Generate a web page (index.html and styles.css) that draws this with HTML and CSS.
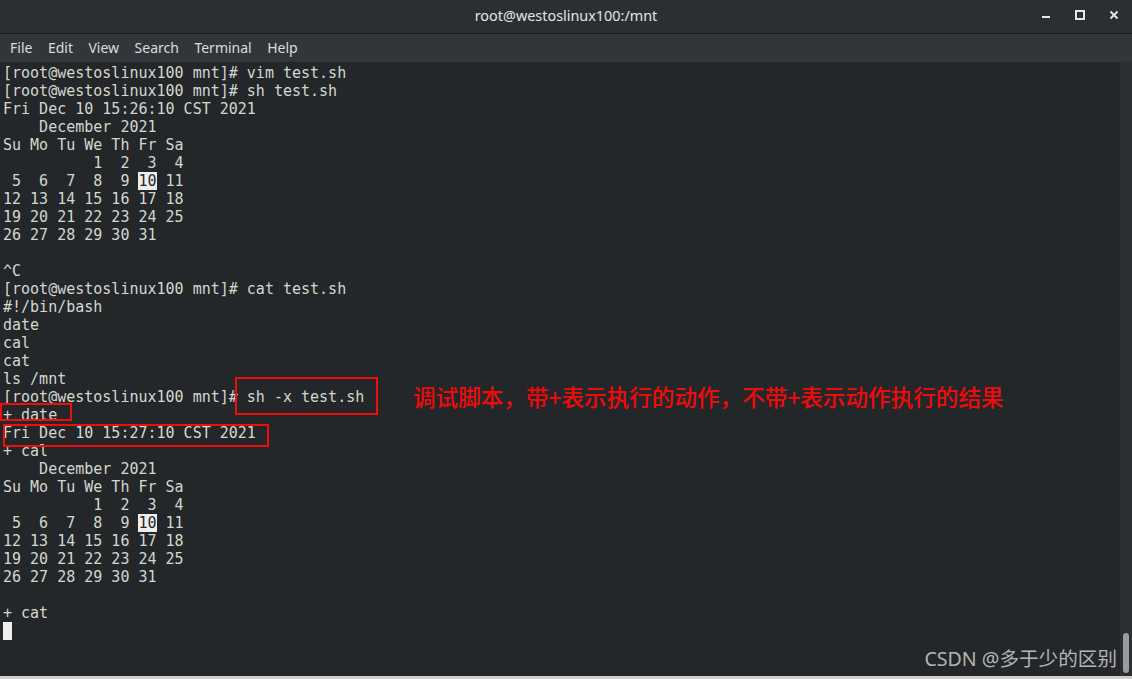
FILE: index.html
```html
<!doctype html>
<html lang="en">
<head>
  <meta charset="UTF-8">
  <meta name="viewport" content="width=device-width, initial-scale=1">
  <title>root@westoslinux100:/mnt</title>
  <link rel="stylesheet" href="styles.css">
</head>
<body>
  <div class="window">
    <header class="titlebar">
      <div class="title">root@westoslinux100:/mnt</div>
      <div class="win-buttons">
        <svg class="win-btn" width="10" height="10" viewBox="0 0 10 10"><rect x="1" y="6" width="8" height="2" fill="#e8e8e8"/></svg>
        <svg class="win-btn" width="10" height="10" viewBox="0 0 10 10"><rect x="1" y="1" width="8" height="8" fill="none" stroke="#e8e8e8" stroke-width="2"/></svg>
        <svg class="win-btn" width="10" height="10" viewBox="0 0 10 10"><path d="M1.5 1.5 L8.5 8.5 M8.5 1.5 L1.5 8.5" stroke="#e8e8e8" stroke-width="1.8"/></svg>
      </div>
    </header>
    <nav class="menubar">
      <span>File</span>
      <span>Edit</span>
      <span>View</span>
      <span>Search</span>
      <span>Terminal</span>
      <span>Help</span>
    </nav>
    <div class="term-area">
      <div class="term">
<pre class="term-text">[root@westoslinux100 mnt]# vim test.sh
[root@westoslinux100 mnt]# sh test.sh
Fri Dec 10 15:26:10 CST 2021
    December 2021
Su Mo Tu We Th Fr Sa
          1  2  3  4
 5  6  7  8  9 <span class="hl">10</span> 11
12 13 14 15 16 17 18
19 20 21 22 23 24 25
26 27 28 29 30 31

^C
[root@westoslinux100 mnt]# cat test.sh
#!/bin/bash
date
cal
cat
ls /mnt
[root@westoslinux100 mnt]# sh -x test.sh
+ date
Fri Dec 10 15:27:10 CST 2021
+ cal
    December 2021
Su Mo Tu We Th Fr Sa
          1  2  3  4
 5  6  7  8  9 <span class="hl">10</span> 11
12 13 14 15 16 17 18
19 20 21 22 23 24 25
26 27 28 29 30 31

+ cat
<span class="cursor"> </span></pre>

        <!-- annotation marks drawn over the output -->
        <div class="mark mark-cmd"></div>
        <div class="mark mark-date"></div>
        <div class="mark mark-out"></div>
        <div class="note">调试脚本，带+表示执行的动作，不带+表示动作执行的结果</div>
        <div class="watermark">CSDN @多于少的区别</div>
      </div>
      <div class="scrollbar">
        <div class="thumb"></div>
      </div>
    </div>
    <div class="bottom-strip"></div>
  </div>
</body>
</html>
```

FILE: styles.css
```css
html, body {
  margin: 0;
  padding: 0;
}

body {
  width: 1132px;
  height: 679px;
  overflow: hidden;
  background-color: #232729;
  font-family: 'Noto Sans', 'DejaVu Sans', sans-serif;
}

.window {
  display: flex;
  flex-direction: column;
  height: 679px;
}

.titlebar {
  position: relative;
  height: 33px;
  flex: none;
  background-color: #2c2f32;
  border-bottom: 1px solid #1a1c1e;
  display: flex;
  align-items: center;
  justify-content: center;
}

.title {
  color: #e4e4e4;
  font-size: 14.4px;
  margin-top: -3px;
}

.win-buttons {
  position: absolute;
  right: 13px;
  top: 10px;
  display: flex;
  gap: 24px;
}

.win-btn {
  display: block;
}

.menubar {
  height: 28px;
  flex: none;
  background-color: #32363a;
  display: flex;
  align-items: center;
  gap: 15.5px;
  padding-left: 10px;
  color: #dcdcdc;
  font-size: 14px;
}

.menubar span {
  margin-top: -2px;
}

.term-area {
  height: 614px;
  flex: none;
  display: flex;
}

.term {
  position: relative;
  flex: 1;
  background-color: #232729;
  overflow: hidden;
}

.term-text {
  margin: 0;
  padding: 2px 0 0 3px;
  font-family: 'DejaVu Sans Mono', monospace;
  font-size: 15px;
  line-height: 18px;
  color: #d3d7cf;
}

.hl {
  background-color: #eeeeec;
  color: #232729;
}

.cursor {
  display: inline-block;
  width: 9px;
  height: 18px;
  vertical-align: top;
  background-color: #eeeeec;
}

.mark {
  position: absolute;
  border: 2px solid #f20d0d;
  box-sizing: border-box;
}

.mark-cmd {
  left: 235px;
  top: 315px;
  width: 143px;
  height: 38px;
}

.mark-date {
  left: 0;
  top: 341px;
  width: 72px;
  height: 18px;
}

.mark-out {
  left: 3px;
  top: 362px;
  width: 266px;
  height: 23px;
}

.note {
  position: absolute;
  left: 413px;
  top: 320px;
  font-family: 'Noto Sans CJK SC', sans-serif;
  font-size: 22.6px;
  line-height: 30px;
  font-weight: 500;
  color: #f00a0a;
  white-space: nowrap;
}

.watermark {
  position: absolute;
  right: 3px;
  top: 583px;
  font-family: 'Noto Sans', 'Noto Sans CJK SC', sans-serif;
  font-size: 19.6px;
  line-height: 28px;
  color: #b4b4b4;
  white-space: nowrap;
}

.scrollbar {
  width: 12px;
  flex: none;
  background-color: #2a2f31;
  position: relative;
}

.thumb {
  position: absolute;
  left: 3px;
  bottom: 3px;
  width: 6px;
  height: 40px;
  border-radius: 3px;
  background-color: #9c9c9c;
}

.bottom-strip {
  flex: 1;
  background-color: #cfcfcf;
}
```
